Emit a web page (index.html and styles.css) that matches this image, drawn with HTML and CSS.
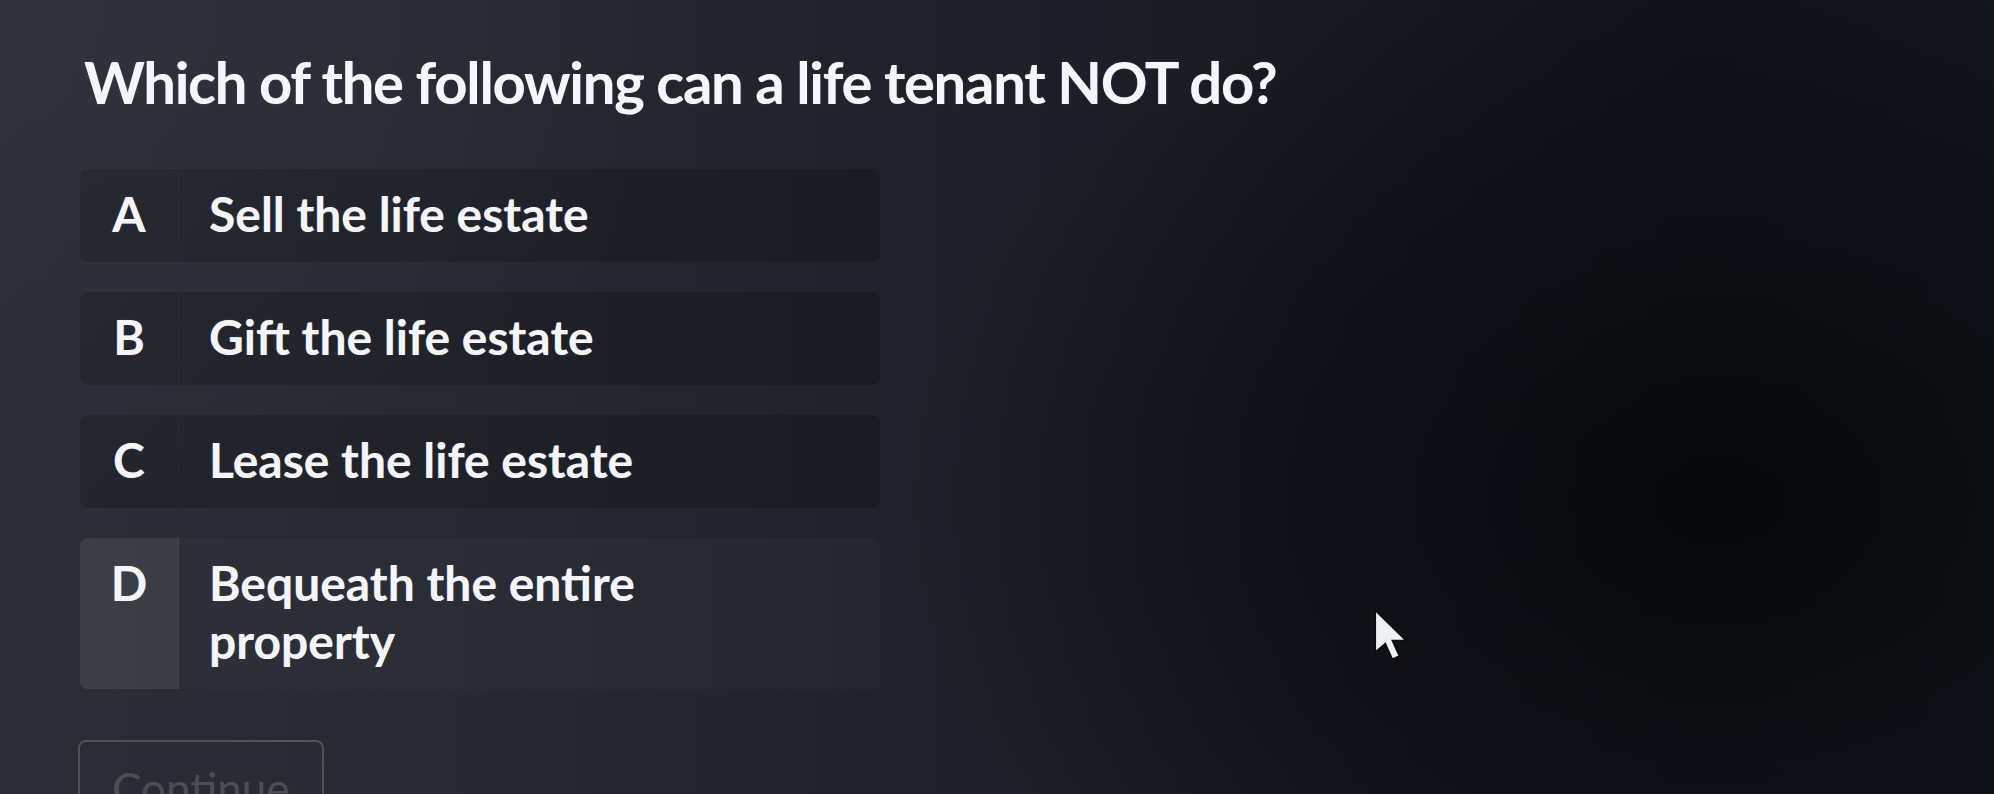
FILE: index.html
```html
<!DOCTYPE html>
<html lang="en">
<head>
<meta charset="utf-8">
<title>Quiz question</title>
<link rel="stylesheet" href="styles.css">
</head>
<body>
<main class="quiz">
  <h1 class="question">Which of the following can a life tenant NOT do?</h1>
  <ul class="options">
    <li class="option">
      <span class="option-letter">A</span>
      <span class="option-text">Sell the life estate</span>
    </li>
    <li class="option">
      <span class="option-letter">B</span>
      <span class="option-text">Gift the life estate</span>
    </li>
    <li class="option">
      <span class="option-letter">C</span>
      <span class="option-text">Lease the life estate</span>
    </li>
    <li class="option option-active">
      <span class="option-letter">D</span>
      <span class="option-text">Bequeath the entire property</span>
    </li>
  </ul>
  <button class="continue" type="button" disabled>Continue</button>
</main>
<svg class="pointer" viewBox="0 0 28 40" aria-hidden="true">
  <path d="M1.5 1.5 L1.5 33 L9 26.5 L14.2 38 L19.6 35.6 L14.4 24.2 L24.5 24.2 Z" fill="#eef0f4" stroke="#0c0d11" stroke-width="1.4" stroke-linejoin="miter"/>
</svg>
</body>
</html>
```
FILE: styles.css
```css
html, body {
  margin: 0;
  padding: 0;
  height: 100%;
}

body {
  width: 1994px;
  height: 794px;
  overflow: hidden;
  position: relative;
  font-family: Lato, "Open Sans", "Liberation Sans", sans-serif;
  color: #f3f5f9;
  background:
    radial-gradient(ellipse 820px 560px at 1720px 500px, rgba(5, 6, 10, 0.88), rgba(5, 6, 10, 0) 100%),
    radial-gradient(ellipse 700px 500px at 0px 0px, rgba(60, 63, 74, 0.35), rgba(60, 63, 74, 0) 100%),
    linear-gradient(90deg, #2b2e37 0%, #262932 22%, #1f222b 45%, #191b23 65%, #13151b 85%, #15171d 100%);
}

.quiz {
  display: flex;
  flex-direction: column;
  align-items: flex-start;
  padding: 46px 0 0 80px;
}

.question {
  margin: 0 0 51px 4px;
  font-size: 58px;
  line-height: 72px;
  font-weight: 700;
  letter-spacing: -1.3px;
  color: #f4f6fa;
  text-shadow: 0 0 1px rgba(255, 255, 255, 0.35);
}

.options {
  list-style: none;
  margin: 0;
  padding: 0;
  display: flex;
  flex-direction: column;
  gap: 30px;
}

.option {
  display: flex;
  width: 800px;
  border-radius: 7px;
  background: rgba(0, 0, 0, 0.16);
  overflow: hidden;
}

.option-letter {
  flex: 0 0 98px;
  text-align: center;
  padding: 16px 0 19px;
  font-size: 48px;
  line-height: 58px;
  font-weight: 700;
  border-right: 1px solid rgba(255, 255, 255, 0.025);
  text-shadow: 0 0 1px rgba(255, 255, 255, 0.3);
}

.option-text {
  padding: 16px 30px 19px 30px;
  max-width: 560px;
  font-size: 48px;
  line-height: 58px;
  font-weight: 700;
  letter-spacing: 0;
  text-shadow: 0 0 1px rgba(255, 255, 255, 0.3);
}

.option-active {
  background: rgba(255, 255, 255, 0.02);
}

.option-active .option-letter {
  background: rgba(255, 255, 255, 0.065);
}

.continue {
  margin-top: 51px;
  margin-left: -2px;
  padding: 20px 32px 30px;
  font-family: Lato, "Open Sans", "Liberation Sans", sans-serif;
  font-size: 44px;
  line-height: 53px;
  font-weight: 400;
  color: #4b4e55;
  background: transparent;
  border: 2px solid #4f5259;
  border-radius: 8px;
}

.pointer {
  position: absolute;
  left: 1373px;
  top: 608px;
  width: 38px;
  height: 54px;
}
```
